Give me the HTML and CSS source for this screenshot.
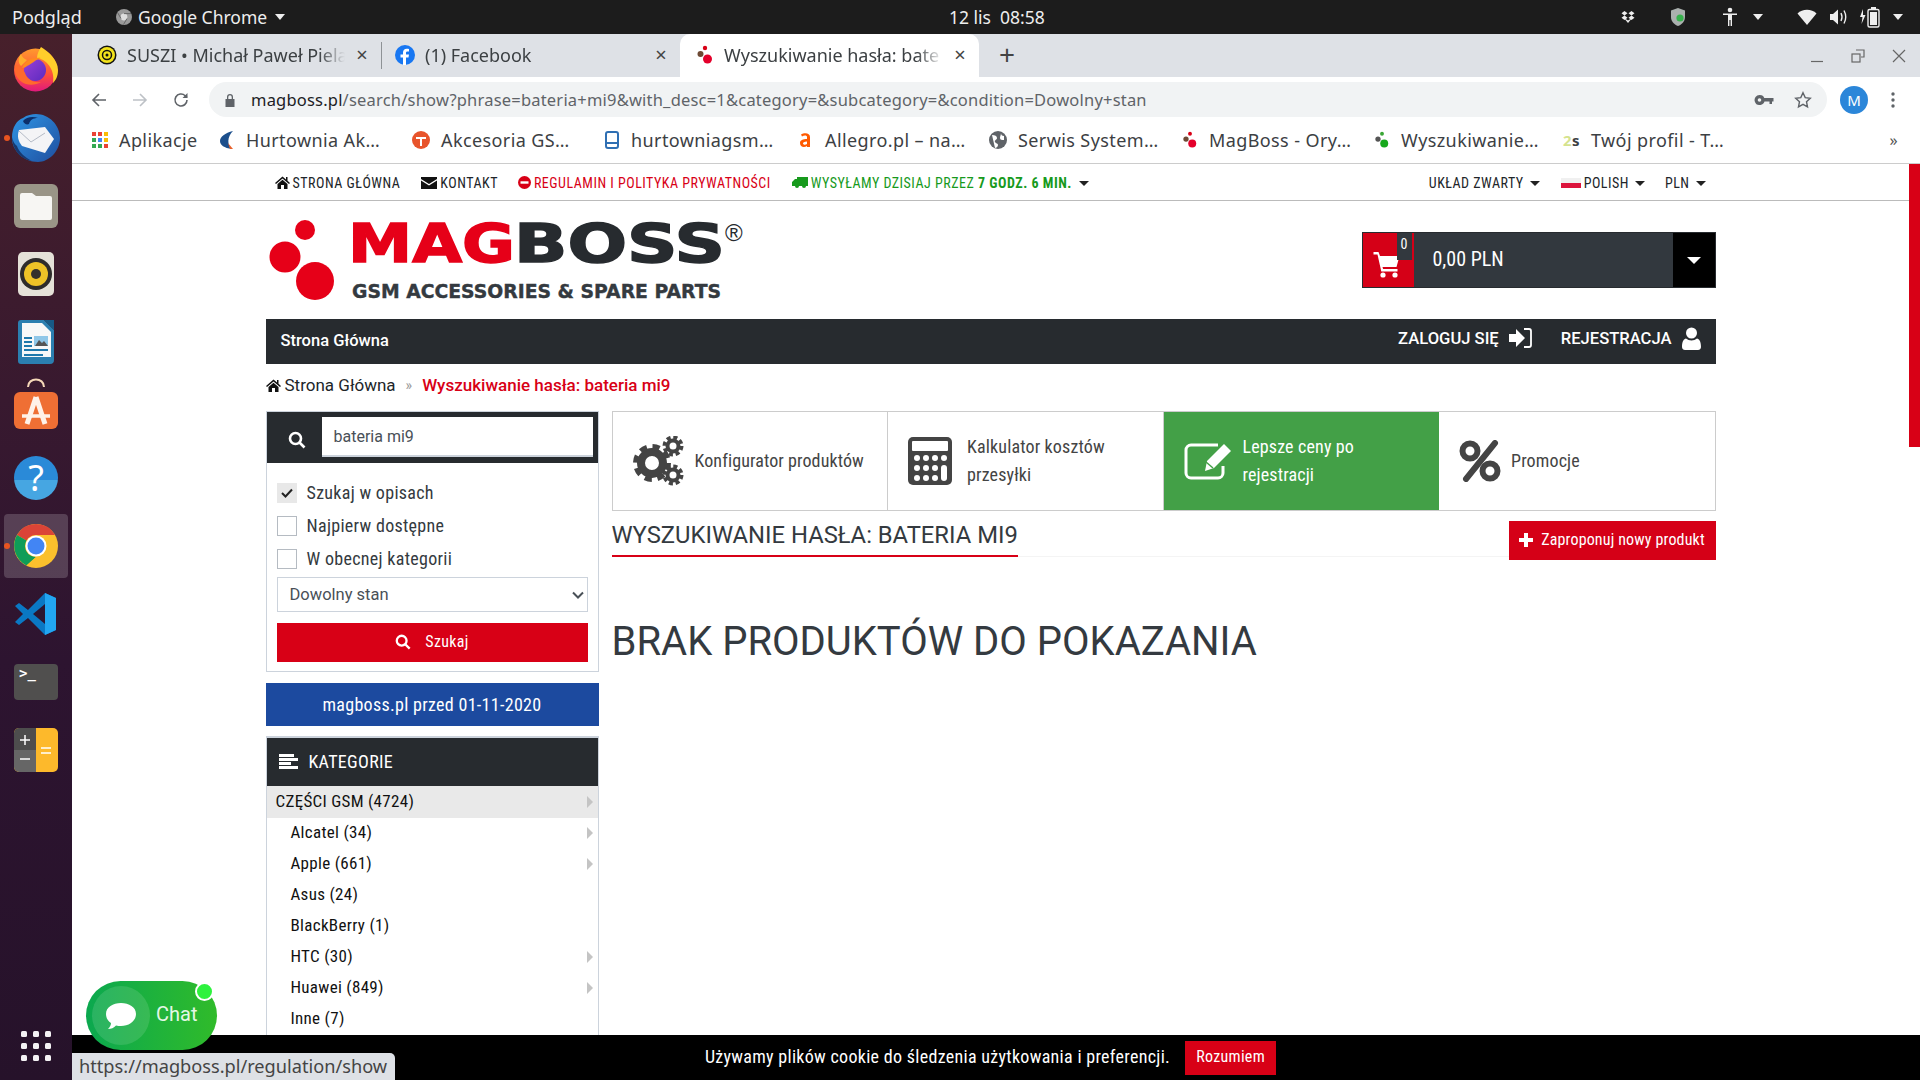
FILE: index.html
```html
<!DOCTYPE html>
<html lang="pl">
<head>
<meta charset="utf-8">
<title>Wyszukiwanie hasła: bateria mi9</title>
<link rel="stylesheet" href="styles.css">
</head>
<body>
<div class="desktop">
  <header class="topbar">
    <span class="tb-podglad">Podgląd</span>
    <svg class="tb-chrome" width="16" height="16" viewBox="0 0 16 16"><circle cx="8" cy="8" r="8" fill="#9a9a9a"/><circle cx="8" cy="8" r="3.400" fill="#ddd"/><path d="M8 4.600h7M5 9.500 1.500 3.500M11 9.500 7.500 15.500" stroke="#666" stroke-width="1"/></svg>
    <span class="tb-app">Google Chrome</span>
    <span class="caret tb-caret"></span>
    <span class="tb-clock">12 lis&nbsp; 08:58</span>
    <span class="tb-right">
      <svg class="ti-drop" width="14" height="14" viewBox="0 0 14 14" fill="#eee"><path d="M3.500 1 .5 3.200l3 2.200 3-2.200zM10.500 1l-3 2.200 3 2.200 3-2.200zM3.500 5.600l-3 2.200 3 2.200 3-2.200zM10.500 5.600l-3 2.200 3 2.200 3-2.200zM7 10.400l-3-2-.5.4L7 13l3.500-4.200-.5-.4z"/></svg>
      <svg class="ti-shield" width="16" height="20" viewBox="0 0 16 20"><path d="M8 1 1 3.500V10c0 4.500 3.500 7.800 7 9 3.500-1.200 7-4.500 7-9V3.500z" fill="#aab0ae"/><circle cx="10" cy="11" r="3.600" fill="#37b24d"/></svg>
      <svg class="ti-a11y" width="16" height="20" viewBox="0 0 16 20" fill="#eee"><circle cx="8" cy="3" r="2.300"/><path d="M1 6.500h14v1.600H10V19H8.600v-6H7.400v6H6V8.100H1z"/></svg>
      <span class="caret ti-c1"></span>
      <svg class="ti-wifi" width="20" height="16" viewBox="0 0 20 16" fill="#eee"><path d="M10 16 .5 4.500C3 2 6.300.8 10 .8s7 1.200 9.500 3.700z"/></svg>
      <svg class="ti-vol" width="20" height="18" viewBox="0 0 20 18"><path d="M1 6h3l5-4.500v15L4 12H1z" fill="#eee"/><path d="M12 5q2 4 0 8M15 2.500q3.500 6.500 0 13" fill="none" stroke="#eee" stroke-width="1.400"/></svg>
      <svg class="ti-bat" width="22" height="22" viewBox="0 0 22 22"><path d="M4 3 1 11h2.500L2.500 18l4-9H4z" fill="#eee"/><rect x="9" y="3.500" width="11" height="17.500" rx="1.500" fill="none" stroke="#eee" stroke-width="1.400"/><rect x="12" y="1" width="5" height="2.500" fill="#eee"/><rect x="11" y="6" width="7" height="13" fill="#eee"/></svg>
      <span class="caret ti-c2"></span>
    </span>
  </header>

  <div class="workspace">
    <nav class="dock">
      <div class="dock-item">
        <svg class="ico-ff" width="46" height="46" viewBox="0 0 46 46"><defs><linearGradient id="ff1" x1="0" y1="0" x2="0" y2="1"><stop offset="0" stop-color="#ff9a2d"/><stop offset=".6" stop-color="#ff4f3a"/><stop offset="1" stop-color="#e0197d"/></linearGradient><linearGradient id="ff2" x1="0" y1="0" x2="1" y2="1"><stop offset="0" stop-color="#9a3fd6"/><stop offset="1" stop-color="#5b2bbf"/></linearGradient></defs><circle cx="22.500" cy="24" r="21.500" fill="url(#ff1)"/><path d="M28 1C36 6 45 14 45 24c0 6-2 10-5 13 2-11-4-23-16-25 0-4 2-8 4-11z" fill="#ffce2b"/><path d="M8 8c1 3 3 5 6 6l-6 6C5 17 5 12 8 8z" fill="#ffb02b"/><circle cx="22" cy="24" r="11" fill="url(#ff2)"/><path d="M9 22c3-8 11-11 19-10-6 2-8 5-14 8-1 1-3 2-5 2z" fill="#ff8a1e"/><path d="M2 20c3-4 7 2 10 7 2 6 8 10 16 9-10 6-23 2-26-10z" fill="#ff6a2d"/></svg>
      </div>
      <div class="dock-item">
        <span class="run-dot"></span>
        <svg width="50" height="50" viewBox="0 0 50 50"><defs><linearGradient id="tb1" x1="0" y1="0" x2="1" y2="1"><stop offset="0" stop-color="#2f96e6"/><stop offset="1" stop-color="#1f4e9e"/></linearGradient></defs><path d="M25 1c13 0 24 11 24 24S38 49 27 49C13 49 1 38 1 25 1 14 6 7 12 5c4-3 9-4 13-4z" fill="url(#tb1)"/><path d="M12 8c3-4 10-5 15-3-5 0-8 2-9 6-2 1-5 0-6-3z" fill="#0c2f6b"/><path d="M1 24c0 12 8 22 20 24-8-4-13-9-15-15-3-2-4-5-5-9z" fill="#17386f"/><path d="M8 17 34 14l9 12-9 14-23-7C7 28 6 23 8 17z" fill="#f4f4f6"/><path d="M8 18l12 11 14-9" fill="none" stroke="#b5bbc6" stroke-width="1"/></svg>
      </div>
      <div class="dock-item">
        <svg width="46" height="46" viewBox="0 0 46 46"><rect x="1" y="1" width="44" height="44" rx="6" fill="#9a9587"/><path d="M7 12a2 2 0 0 1 2-2h10l4 3h14a2 2 0 0 1 2 2v20a2 2 0 0 1-2 2H9a2 2 0 0 1-2-2z" fill="#f7f6f3"/></svg>
      </div>
      <div class="dock-item">
        <svg width="38" height="46" viewBox="0 0 38 46"><rect x="1" y="1" width="36" height="44" rx="5" fill="#e5e1d8"/><circle cx="19" cy="23" r="16" fill="#2e2c2b"/><circle cx="19" cy="23" r="12" fill="#eec327"/><circle cx="19" cy="23" r="5" fill="#33302c"/></svg>
      </div>
      <div class="dock-item">
        <svg width="38" height="46" viewBox="0 0 38 46"><path d="M4 1h23l10 10v30a4 4 0 0 1-4 4H4a3 3 0 0 1-3-3V4a3 3 0 0 1 3-3z" fill="#2b7fb0"/><path d="M5 4h20l9 9v25H5z" fill="#f7f8f8"/><path d="M27 1l10 0v10z" fill="#175a86"/><rect x="17" y="17" width="14" height="10" fill="#8fc7e8"/><path d="M18 27l4-6 3 3 2-2 4 5z" fill="#555"/><path d="M7 18h8v2H7zM7 22h8v2H7zM7 26h8v2H7zM7 30h24v2H7zM7 35h19v2H7z" fill="#1f79ac"/></svg>
      </div>
      <div class="dock-item">
        <svg class="ico-store" width="46" height="52" viewBox="0 0 46 52"><path d="M15 9c0-10 16-10 16 0" fill="none" stroke="#f5d8b8" stroke-width="2"/><rect x="1" y="14" width="44" height="37" rx="6" fill="#ef6f34"/><path d="M23 19 14 46M23 19l9 27" stroke="#fff2e8" stroke-width="5"/><path d="M9 38h28" stroke="#fff2e8" stroke-width="3.500"/></svg>
      </div>
      <div class="dock-item">
        <span class="help-ico">?</span>
      </div>
      <div class="dock-item dock-active">
        <span class="run-dot"></span>
        <svg width="46" height="46" viewBox="0 0 46 46"><circle cx="23" cy="23" r="22" fill="#fbc02d"/><path d="M23 1a22 22 0 0 1 19.050 11H23a11 11 0 0 0-9.500 5.500L4 12A22 22 0 0 1 23 1z" fill="#db4437"/><path d="M4 12l9.500 5.500a11 11 0 0 0 9.500 16.500l-9.500 8.500 0 0A22 22 0 0 1 4 12z" fill="#0f9d58"/><path d="M13.500 42.600 23 34a11 11 0 0 0 9.500-16.500H42A22 22 0 0 1 13.500 42.600z" fill="#fbc02d"/><circle cx="23" cy="23" r="10.500" fill="#fff"/><circle cx="23" cy="23" r="8.500" fill="#4285f4"/></svg>
      </div>
      <div class="dock-item">
        <svg width="44" height="44" viewBox="0 0 44 44"><path d="M31 1 14 18 5 11 1 14l8 8-8 8 4 3 9-7 17 17 11-5V6z" fill="#0a78c4"/><path d="M31 1l11 5v32l-11 5z" fill="#22a6f2"/><path d="M31 12 19 22l12 10z" fill="#2c1530"/></svg>
      </div>
      <div class="dock-item">
        <span class="term-ico">&gt;_</span>
      </div>
      <div class="dock-item">
        <svg width="46" height="46" viewBox="0 0 46 46"><rect x="1" y="1" width="44" height="44" rx="5" fill="#fdb92b"/><path d="M6 1h17v22H1V6a5 5 0 0 1 5-5z" fill="#4d4d4d"/><path d="M1 23h22v22H6a5 5 0 0 1-5-5z" fill="#666"/><path d="M7 13h10M12 8v10M7 32h10M28 21h10M28 26h10" stroke="#fff" stroke-width="1.500"/></svg>
      </div>
      <div class="dock-apps">
        <i></i><i></i><i></i><i></i><i></i><i></i><i></i><i></i><i></i>
      </div>
    </nav>

    <div class="browser">
      <div class="tabstrip">
        <div class="tab">
          <svg class="fav" width="20" height="20" viewBox="0 0 20 20"><circle cx="10" cy="10" r="9.500" fill="#111"/><circle cx="10" cy="10" r="8" fill="#f2e21b"/><circle cx="10" cy="10" r="4.500" fill="none" stroke="#111" stroke-width="1.500"/><circle cx="10" cy="10" r="1.500" fill="#111"/></svg>
          <span class="tab-title">SUSZI • Michał Paweł Piela</span>
          <span class="tab-x">×</span>
        </div>
        <span class="tab-sep"></span>
        <div class="tab tab-fb">
          <svg class="fav" width="20" height="20" viewBox="0 0 20 20"><circle cx="10" cy="10" r="10" fill="#1877f2"/><path d="M11 20v-7.500h2.500L14 9.500h-3V8c0-1 .4-1.500 1.600-1.500H14V4c-.8-.1-1.500-.2-2.300-.2C9.500 3.800 8 5.200 8 7.600v1.900H5.500v3H8V20z" fill="#fff"/></svg>
          <span class="tab-title">(1) Facebook</span>
          <span class="tab-x">×</span>
        </div>
        <div class="tab tab-active">
          <svg class="fav" width="18" height="20" viewBox="0 0 18 20"><circle cx="9" cy="3" r="2.200" fill="#d80016"/><circle cx="4.500" cy="9" r="3" fill="#6e4a35"/><circle cx="11.500" cy="14" r="4.500" fill="#e4002b"/></svg>
          <span class="tab-title">Wyszukiwanie hasła: bate</span>
          <span class="tab-x">×</span>
        </div>
        <span class="tab-plus">+</span>
        <div class="winctl">
          <svg width="16" height="16" viewBox="0 0 16 16"><path d="M2 13.500h12" stroke="#666" stroke-width="1.200"/></svg>
          <svg width="16" height="16" viewBox="0 0 16 16" fill="none" stroke="#666" stroke-width="1.200"><path d="M6 2h8v7h-3"/><rect x="2" y="6" width="8" height="8"/></svg>
          <svg width="16" height="16" viewBox="0 0 16 16"><path d="M2 2l12 12M14 2 2 14" stroke="#666" stroke-width="1.200"/></svg>
        </div>
      </div>

      <div class="toolbar">
        <svg class="tool-back" width="18" height="18" viewBox="0 0 18 18" fill="none" stroke="#5f6368" stroke-width="1.600"><path d="M16 9H3M9 3 3 9l6 6"/></svg>
        <svg class="tool-fwd" width="18" height="18" viewBox="0 0 18 18" fill="none" stroke="#bdc1c6" stroke-width="1.600"><path d="M2 9h13M9 3l6 6-6 6"/></svg>
        <svg class="tool-reload" width="18" height="18" viewBox="0 0 18 18" fill="none" stroke="#5f6368" stroke-width="1.600"><path d="M15 9a6 6 0 1 1-1.800-4.300L15 6.500"/><path d="M15.500 2v5h-5" fill="#5f6368" stroke="none"/></svg>
        <div class="omnibox">
          <svg class="omni-lock" width="12" height="14" viewBox="0 0 12 14" fill="#5f6368"><path d="M3 6V4a3 3 0 0 1 6 0v2h1.500v8h-9V6zm1.300 0h3.400V4a1.700 1.700 0 0 0-3.400 0z"/></svg>
          <span class="omni-url"><b>magboss.pl</b>/search/show?phrase=bateria+mi9&amp;with_desc=1&amp;category=&amp;subcategory=&amp;condition=Dowolny+stan</span>
          <svg class="omni-key" width="20" height="12" viewBox="0 0 20 12" fill="#5f6368"><path d="M5.500 1a5 5 0 1 1-4.700 6.500 5 5 0 0 1 4.700-6.500zm0 3.200a1.800 1.800 0 1 0 0 3.600 1.800 1.800 0 0 0 0-3.600zM10 4h9.500v3.500H18V10h-2.500V7.500H10z"/></svg>
          <svg class="omni-star" width="18" height="18" viewBox="0 0 18 18" fill="none" stroke="#5f6368" stroke-width="1.400"><path d="M9 1.800l2.200 4.800 5.100.6-3.800 3.500 1 5.100L9 13.300l-4.500 2.500 1-5.100-3.800-3.500 5.100-.6z"/></svg>
        </div>
        <span class="avatar">M</span>
        <svg class="kebab" width="4" height="16" viewBox="0 0 4 16" fill="#5f6368"><circle cx="2" cy="2" r="1.700"/><circle cx="2" cy="8" r="1.700"/><circle cx="2" cy="14" r="1.700"/></svg>
      </div>

      <div class="bookmarks">
        <div class="bm"><svg width="16" height="16" viewBox="0 0 16 16"><path d="M0 0h4v4H0z" fill="#ea4335"/><path d="M6 0h4v4H6z" fill="#ea4335"/><path d="M12 0h4v4h-4z" fill="#fbbc04"/><path d="M0 6h4v4H0z" fill="#34a853"/><path d="M6 6h4v4H6z" fill="#4285f4"/><path d="M12 6h4v4h-4z" fill="#fbbc04"/><path d="M0 12h4v4H0z" fill="#34a853"/><path d="M6 12h4v4H6z" fill="#34a853"/><path d="M12 12h4v4h-4z" fill="#ea4335"/></svg><span>Aplikacje</span></div>
        <div class="bm"><svg width="16" height="20" viewBox="0 0 16 18"><path d="M14 0C6 2 1 6 1 10s4 7 12 8C8 14 8 6 14 0z" fill="#1c4f8c"/><path d="M9 12l5 6-3 0z" fill="#e8622c"/></svg><span>Hurtownia Ak…</span></div>
        <div class="bm"><svg width="18" height="18" viewBox="0 0 18 18"><circle cx="9" cy="9" r="9" fill="#e8542b"/><path d="M4 6h10v2H10v7H8V8H4z" fill="#fff"/></svg><span>Akcesoria GS…</span></div>
        <div class="bm"><svg width="16" height="20" viewBox="0 0 16 18" fill="none" stroke="#2f6fb3" stroke-width="2"><rect x="2" y="1" width="12" height="16" rx="2"/><path d="M2 12h12"/></svg><span>hurtowniagsm…</span></div>
        <div class="bm"><svg width="16" height="18" viewBox="0 0 16 18"><path d="M3 3.500c3-2 9-2 9 2.500v10H9v-1c-3 2-7 1-7-3 0-3 3-4 7-4V6c0-2-3-2-5-.5zM9 10.500c-3 0-4 1-4 2s2 2 4 .5z" fill="#ff5a00"/></svg><span>Allegro.pl – na…</span></div>
        <div class="bm"><svg width="18" height="18" viewBox="0 0 18 18"><circle cx="9" cy="9" r="9" fill="#5f6368"/><path d="M3 4c3 0 5 1 5 3S5 9 6 11s3 1 3 3-2 3-3 3M12 2c0 2 1 3 3 3v4c-2 0-4 0-4-2s1-3 1-5z" fill="#fff"/></svg><span>Serwis System…</span></div>
        <div class="bm"><svg width="16" height="20" viewBox="0 0 18 20"><circle cx="9" cy="3" r="2.200" fill="#d80016"/><circle cx="4.500" cy="9" r="3" fill="#6e4a35"/><circle cx="11.500" cy="14" r="4.500" fill="#e4002b"/></svg><span>MagBoss - Ory…</span></div>
        <div class="bm"><svg width="16" height="20" viewBox="0 0 18 20"><circle cx="9" cy="3" r="2.200" fill="#3aa635"/><circle cx="4.500" cy="9" r="3" fill="#555"/><circle cx="11.500" cy="14" r="4.500" fill="#17a81c"/></svg><span>Wyszukiwanie…</span></div>
        <div class="bm"><span class="bm-2s"><em>2</em>s</span><span>Twój profil - T…</span></div>
        <span class="bm-more">»</span>
      </div>

      <div class="viewport">
        <div class="page">
          <div class="utility">
            <div class="wrap util-row">
              <a class="u-home"><svg width="15" height="13" viewBox="0 0 15 13" fill="#111"><path d="M7.500.5 0 7l1 1 6.500-5.600L14 8l1-1-2.500-2.200V1H11v2.400zM2.500 8v5h3.500V9h3v4h3.500V8l-5-4.300z"/></svg>STRONA GŁÓWNA</a>
              <a class="u-contact"><svg width="16" height="12" viewBox="0 0 16 12" fill="#111"><path d="M0 0h16v2L8 7 0 2zM0 3.600 8 8.600 16 3.600V12H0z"/></svg>KONTAKT</a>
              <a class="u-rules"><svg width="13" height="13" viewBox="0 0 13 13"><circle cx="6.500" cy="6.500" r="6.500" fill="#d80016"/><rect x="2.500" y="5.300" width="8" height="2.400" fill="#fff"/></svg>REGULAMIN I POLITYKA PRYWATNOŚCI</a>
              <a class="u-ship"><svg width="16" height="12" viewBox="0 0 16 12" fill="#179a1d"><path d="M5 0h11v9H14a2 2 0 0 1-4 0H7a2 2 0 0 1-4 0H0V5l3-3h2z"/></svg>WYSYŁAMY DZISIAJ PRZEZ <b>7 GODZ. 6 MIN.</b><span class="caret dark u-c"></span></a>
              <span class="util-right">
                <a class="u-layout">UKŁAD ZWARTY<span class="caret dark"></span></a>
                <a class="u-lang"><span class="flag"></span>POLISH<span class="caret dark"></span></a>
                <a class="u-cur">PLN<span class="caret dark"></span></a>
              </span>
            </div>
          </div>

          <div class="wrap">
            <div class="masthead">
              <svg class="logo" width="490" height="92" viewBox="0 0 490 92">
                <circle cx="39" cy="19" r="10" fill="#e60018"/><circle cx="19" cy="46" r="15.500" fill="#e60018"/><circle cx="49" cy="70" r="19" fill="#e60018"/>
                <text x="82" y="51" class="logo-big logo-red" textLength="167" lengthAdjust="spacingAndGlyphs">MAG</text>
                <text x="248" y="51" class="logo-big logo-dark" textLength="211" lengthAdjust="spacingAndGlyphs">BOSS</text>
                <text x="459" y="30" class="logo-reg">®</text>
                <text x="86" y="87" class="logo-tag" textLength="369" lengthAdjust="spacingAndGlyphs">GSM ACCESSORIES &amp; SPARE PARTS</text>
              </svg>
              <div class="cart">
                <div class="cart-ico">
                  <svg width="29" height="27" viewBox="0 0 28 27" fill="#fff"><path d="M0 1h5l1.500 4H26l-3 11H9l.6 2H24v2.500H7.800L4 3.500H0z"/><circle cx="9.500" cy="24" r="2.600"/><circle cx="21.500" cy="24" r="2.600"/></svg>
                  <span class="cart-badge">0</span>
                </div>
                <span class="cart-sum">0,00 PLN</span>
                <span class="cart-drop"><span class="caret big"></span></span>
              </div>
            </div>

            <div class="mainnav">
              <span class="nav-home">Strona Główna</span>
              <span class="nav-login">ZALOGUJ SIĘ
                <svg width="23" height="20" viewBox="0 0 23 20" fill="#fff"><path d="M0 6h7V1l9 9-9 9v-5H0z"/><path d="M15 1h5a2 2 0 0 1 2 2v14a2 2 0 0 1-2 2h-5" fill="none" stroke="#fff" stroke-width="1.800"/></svg>
              </span>
              <span class="nav-reg">REJESTRACJA
                <svg width="19" height="23" viewBox="0 0 19 23" fill="#fff"><circle cx="9.500" cy="6" r="5.500"/><path d="M0 20c0-6 2-8 4-8.500 3 2.500 8 2.500 11 0 2 .5 4 2.500 4 8.500 0 2-1.500 3-3 3H3c-1.500 0-3-1-3-3z"/></svg>
              </span>
            </div>

            <div class="crumbs">
              <svg width="15" height="13" viewBox="0 0 15 13" fill="#111"><path d="M7.500.5 0 7l1 1 6.500-5.600L14 8l1-1-2.500-2.200V1H11v2.400zM2.500 8v5h3.500V9h3v4h3.500V8l-5-4.300z"/></svg>
              <span class="cr-home">Strona Główna</span>
              <span class="cr-sep">»</span>
              <span class="cr-cur">Wyszukiwanie hasła: bateria mi9</span>
            </div>

            <div class="columns">
              <aside class="side">
                <div class="searchbox">
                  <div class="sb-head">
                    <svg class="ico-search" width="18" height="18" viewBox="0 0 18 18" fill="none" stroke="#fff" stroke-width="2.600"><circle cx="7.500" cy="7.500" r="5.500"/><path d="M11.500 11.500 16.500 16.500"/></svg>
                    <span class="sb-input">bateria mi9</span>
                  </div>
                  <div class="sb-body">
                    <div class="chk"><span class="box on"><svg width="12" height="10" viewBox="0 0 12 10"><path d="M1 5l3.500 3.500L11 1.500" fill="none" stroke="#222" stroke-width="2"/></svg></span><span class="cond">Szukaj w opisach</span></div>
                    <div class="chk"><span class="box"></span><span class="cond">Najpierw dostępne</span></div>
                    <div class="chk"><span class="box"></span><span class="cond">W obecnej kategorii</span></div>
                    <div class="sel"><span>Dowolny stan</span><svg width="12" height="8" viewBox="0 0 12 8"><path d="M1 1.500l5 5 5-5" fill="none" stroke="#495057" stroke-width="2"/></svg></div>
                    <div class="sb-btn"><svg width="16" height="16" viewBox="0 0 18 18" fill="none" stroke="#fff" stroke-width="2.600"><circle cx="7.500" cy="7.500" r="5.500"/><path d="M11.500 11.500 16.500 16.500"/></svg><span class="cond">Szukaj</span></div>
                  </div>
                </div>
                <div class="oldsite"><span class="cond">magboss.pl przed 01-11-2020</span></div>
                <div class="cats">
                  <div class="cats-head">
                    <svg width="19" height="15" viewBox="0 0 19 15" fill="#fff"><path d="M0 0h15v3H0zM0 4h19v3H0zM0 8h12v3H0zM0 12h19v3H0z"/></svg>
                    <span class="cond">KATEGORIE</span>
                  </div>
                  <div class="cat cat-top"><span class="cond">CZĘŚCI GSM (4724)</span><i class="arr"></i></div>
                  <div class="cat"><span class="cond">Alcatel (34)</span><i class="arr"></i></div>
                  <div class="cat"><span class="cond">Apple (661)</span><i class="arr"></i></div>
                  <div class="cat"><span class="cond">Asus (24)</span></div>
                  <div class="cat"><span class="cond">BlackBerry (1)</span></div>
                  <div class="cat"><span class="cond">HTC (30)</span><i class="arr"></i></div>
                  <div class="cat"><span class="cond">Huawei (849)</span><i class="arr"></i></div>
                  <div class="cat"><span class="cond">Inne (7)</span></div>
                </div>
              </aside>

              <main class="content">
                <div class="promo">
                  <div class="promo-item promo-cogs">
                    <svg class="pi-cogs" width="52" height="50" viewBox="0 0 52 50" fill="none" stroke="#444">
                      <circle cx="19" cy="27" r="11" stroke-width="8"/><circle cx="19" cy="27" r="16" stroke-width="6" stroke-dasharray="7 5.570"/>
                      <circle cx="40" cy="10" r="5.500" stroke-width="4"/><circle cx="40" cy="10" r="8.500" stroke-width="4" stroke-dasharray="4 2.680"/>
                      <circle cx="40" cy="39" r="5.500" stroke-width="4"/><circle cx="40" cy="39" r="8.500" stroke-width="4" stroke-dasharray="4 2.680"/>
                    </svg>
                    <span class="cond promo-text">Konfigurator produktów</span>
                  </div>
                  <div class="promo-item promo-calc">
                    <svg class="pi-calc" width="44" height="48" viewBox="0 0 44 48"><rect width="44" height="48" rx="5" fill="#444"/><rect x="4" y="4" width="36" height="10" rx="1" fill="#fff"/><g fill="#fff"><circle cx="9" cy="21" r="3"/><circle cx="18" cy="21" r="3"/><circle cx="27" cy="21" r="3"/><circle cx="36" cy="21" r="3"/><circle cx="9" cy="31" r="3"/><circle cx="18" cy="31" r="3"/><circle cx="27" cy="31" r="3"/><circle cx="9" cy="41" r="3"/><circle cx="18" cy="41" r="3"/><circle cx="27" cy="41" r="3"/><rect x="33" y="28" width="6" height="16" rx="3"/></g></svg>
                    <span class="cond promo-text">Kalkulator kosztów<br>przesyłki</span>
                  </div>
                  <div class="promo-item promo-green">
                    <svg class="pi-edit" width="48" height="38" viewBox="0 0 48 38"><path d="M39 24v7a5 5 0 0 1-5 5H7a5 5 0 0 1-5-5V8a5 5 0 0 1 5-5h27" fill="none" stroke="#fff" stroke-width="3"/><path d="M40 2l7 7-17 17-9 3 2-10z" fill="#fff"/><path d="M22 20l7 6" stroke="#43a047" stroke-width="1.500"/></svg>
                    <span class="cond promo-text">Lepsze ceny po<br>rejestracji</span>
                  </div>
                  <div class="promo-item">
                    <svg class="pi-pct" width="42" height="42" viewBox="0 0 42 42" fill="none" stroke="#444"><circle cx="11" cy="11" r="7.500" stroke-width="6"/><circle cx="31" cy="31" r="7.500" stroke-width="6"/><path d="M36 3 7 39" stroke-width="6" stroke-linecap="round"/></svg>
                    <span class="cond promo-text">Promocje</span>
                  </div>
                </div>

                <div class="titlerow">
                  <div class="titleline"><h1 class="title">WYSZUKIWANIE HASŁA: BATERIA MI9</h1></div>
                  <div class="suggest"><svg width="14" height="14" viewBox="0 0 14 14" fill="#fff"><path d="M5 0h4v5h5v4H9v5H5V9H0V5h5z"/></svg><span class="cond promo-text">Zaproponuj nowy produkt</span></div>
                </div>

                <h2 class="empty">BRAK PRODUKTÓW DO POKAZANIA</h2>
              </main>
            </div>
          </div>
        </div>
        <div class="scrollbar"><div class="thumb"></div></div>
      </div>
    </div>
  </div>

  <div class="cookie">
    <span class="cond cookie-text">Używamy plików cookie do śledzenia użytkowania i preferencji.</span>
    <span class="cookie-btn"><span class="cond">Rozumiem</span></span>
  </div>
  <div class="chat">
    <span class="chat-inner">
      <svg width="32" height="28" viewBox="0 0 32 28" fill="#fff"><path d="M16 1c8 0 15 4 15 11s-7 12-15 12c-2 0-3 0-5-.5C9 26 6 27 3 27c2-2 3-4 3-6C3 19 1 16 1 12 1 5 8 1 16 1z"/></svg>
    </span>
    <span class="chat-label">Chat</span>
    <span class="chat-dot"></span>
  </div>
  <div class="status">https://magboss.pl/regulation/show</div>
</div>
</body>
</html>
```
FILE: styles.css
```css
* { box-sizing: border-box; }
html, body { margin: 0; height: 100%; overflow: hidden; }
body { font-family: Roboto, "Liberation Sans", sans-serif; color: #343a40; background: #fff; }
.desktop { position: relative; width: 1920px; height: 1080px; display: flex; flex-direction: column; overflow: hidden; }
.cond { font-stretch: 75%; display: inline-block; letter-spacing: .3px; white-space: nowrap; }

.caret { display: inline-block; width: 0; height: 0; border-left: 5px solid transparent; border-right: 5px solid transparent; border-top: 6px solid #eee; }
.caret.dark { border-left-width: 5px; border-right-width: 5px; border-top: 5px solid #222; margin-left: 6px; vertical-align: 2px; }
.caret.big { border-left-width: 7px; border-right-width: 7px; border-top: 7px solid #fff; }

/* top bar */
.topbar { height: 34px; flex: none; background: #1c1c1c; color: #eee; display: flex; align-items: center; padding-left: 12px; font: 17.500px "Noto Sans", sans-serif; }
.tb-podglad { width: 104px; font-size: 18px; }
.tb-chrome { margin-right: 6px; }
.tb-app { width: 131px; }
.tb-caret { margin-left: 6px; }
.tb-clock { margin-left: 664px; width: 100px; white-space: nowrap; }
.tb-right { display: flex; align-items: center; margin-left: 572px; }
.ti-shield { margin-left: 35px; }
.ti-a11y { margin-left: 36px; }
.ti-c1 { margin-left: 15px; }
.ti-wifi { margin-left: 34px; }
.ti-vol { margin-left: 12px; }
.ti-bat { margin-left: 10px; }
.ti-c2 { margin-left: 12px; }

.workspace { flex: 1; display: flex; min-height: 0; }

/* dock */
.dock { width: 72px; flex: none; display: flex; flex-direction: column; padding-top: 2px; background: linear-gradient(#47202b, #38192f 35%, #2d1430 60%, #26122a); }
.dock-item { height: 68px; flex: none; display: flex; align-items: center; justify-content: center; position: relative; }
.dock-active::before { content: ""; position: absolute; left: 4px; right: 4px; top: 2px; bottom: 2px; background: rgba(255,255,255,.18); border-radius: 4px; }
.dock-item svg { position: relative; }
.ico-ff { margin-bottom: 2px; }
.ico-store { margin-bottom: 12px; }
.run-dot { position: absolute; left: 4px; top: 31px; width: 6px; height: 6px; border-radius: 50%; background: #e95420; z-index: 1; }
.help-ico { width: 44px; height: 44px; border-radius: 50%; background: linear-gradient(#2a8ad8 55%, #46a6e2 55%); color: #fff; font: 36px/44px "Noto Sans", sans-serif; text-align: center; }
.term-ico { width: 44px; height: 36px; border-radius: 4px; background: #504f4e; color: #fff; font: bold 14px/18px "DejaVu Sans Mono", monospace; padding-left: 5px; }
.dock-apps { margin-top: auto; margin-bottom: 19px; margin-left: 21px; width: 30px; display: grid; grid-template-columns: repeat(3, 6px); gap: 6px; }
.dock-apps i { width: 6px; height: 6px; background: #f4f2f4; border-radius: 1.500px; }

/* browser chrome */
.browser { flex: 1; min-width: 0; display: flex; flex-direction: column; }
.tabstrip { height: 43px; flex: none; background: #dee1e6; display: flex; align-items: stretch; padding-left: 12px; font: 18px "Noto Sans", sans-serif; color: #3c4043; }
.tab { width: 297px; display: flex; align-items: center; padding: 0 12px 2px 13px; gap: 10px; }
.tab-fb { width: 298px; }
.tab-sep { width: 1px; margin: 8px 0; background: #8e9296; }
.tab-title { flex: 1; min-width: 0; white-space: nowrap; overflow: hidden; -webkit-mask-image: linear-gradient(90deg, #000 88%, transparent); mask-image: linear-gradient(90deg, #000 88%, transparent); }
.tab-x { width: 14px; font-size: 20px; line-height: 1; text-align: center; color: #444; }
.tab-active { background: #fff; border-radius: 10px 10px 0 0; width: 299px; padding-left: 16px; }
.tab-plus { font-size: 28px; line-height: 41px; margin-left: 20px; color: #444; }
.winctl { margin-left: auto; display: flex; align-items: center; gap: 25px; padding-right: 13px; }

.toolbar { height: 45px; flex: none; background: #fff; display: flex; align-items: center; padding-left: 18px; }
.tool-fwd { margin-left: 23px; }
.tool-reload { margin-left: 23px; }
.omnibox { width: 1618px; height: 35px; margin-left: 19px; background: #f1f3f4; border-radius: 18px; display: flex; align-items: center; padding: 0 15px; }
.omni-url { margin-left: 15px; font: 16.500px "Noto Sans", sans-serif; letter-spacing: .2px; color: #5f6368; white-space: nowrap; flex: 1; }
.omni-url b { font-weight: 400; color: #202124; }
.omni-key { margin-right: 20px; }
.avatar { width: 28px; height: 28px; margin-left: 13px; border-radius: 50%; background: #2b86d9; color: #fff; font: 15px/28px "Noto Sans", sans-serif; text-align: center; }
.kebab { margin-left: 23px; }

.bookmarks { height: 42px; flex: none; background: #fff; border-bottom: 1px solid #ccc; display: grid; grid-template-columns: 127px 193px 192px 194px 191px 193px 192px 189px 170px 1fr; align-items: center; padding: 0 0 5px 20px; font: 18px "Noto Sans", sans-serif; letter-spacing: .4px; color: #3c4043; }
.bm { display: flex; align-items: center; gap: 11px; white-space: nowrap; }
.bm svg { flex: none; }
.bm-2s { font-size: 15px; font-weight: 700; width: 17px; letter-spacing: .5px; }
.bm-2s em { font-style: normal; color: #d5e38e; }
.bm-more { justify-self: end; padding-right: 22px; font-size: 16px; color: #555; }

/* page */
.viewport { flex: 1; display: flex; min-height: 0; overflow: hidden; }
.page { flex: 1; min-width: 0; }
.scrollbar { width: 11px; flex: none; background: #fff; }
.thumb { height: 283px; background: #d80016; }
.wrap { width: 1450px; margin: 0 auto; }

.utility { height: 37px; border-bottom: 1px solid #bbb; font-size: 14px; font-weight: 400; color: #212529; }
.util-row { height: 36px; display: flex; align-items: center; padding: 2px 0 0 9px; font-stretch: 75%; letter-spacing: .5px; white-space: nowrap; }
.util-row svg { margin-right: 3px; vertical-align: -1px; }
.u-contact { margin-left: 21px; }
.u-rules { margin-left: 20px; color: #d80016; }
.u-ship { margin-left: 21px; color: #179a1d; }
.u-ship b { font-weight: 700; }
.u-ship .u-c { margin-left: 7px; }
.util-right { margin-left: auto; display: flex; align-items: center; padding-right: 10px; }
.u-lang { margin-left: 21px; }
.u-cur { margin-left: 20px; }
.flag { display: inline-block; width: 20px; height: 10px; margin-right: 3px; background: linear-gradient(#f0f0f0 50%, #dc143c 50%); vertical-align: 0; }

.masthead { height: 118px; display: flex; align-items: flex-start; }
.logo { margin-top: 10px; }
.logo-big { font: 900 54px "DejaVu Sans", sans-serif; stroke-width: 1.500px; }
.logo-red { fill: #e60018; stroke: #e60018; }
.logo-dark { fill: #272b2f; stroke: #272b2f; }
.logo-reg { font: 24px "Liberation Sans", sans-serif; fill: #272b2f; }
.logo-tag { font: 900 19px "DejaVu Sans", sans-serif; fill: #343a40; stroke: #343a40; stroke-width: .4px; }
.cart { width: 354px; height: 56px; margin-top: 31px; margin-left: auto; background: #32383e; border: 1px solid #272b2f; display: flex; align-items: stretch; }
.cart-ico { width: 51px; background: #d50017; position: relative; display: flex; align-items: center; padding: 8px 0 0 10px; }
.cart-badge { position: absolute; right: 2px; top: 0; width: 15px; height: 27px; background: #32383e; color: #fff; font-size: 14px; line-height: 22px; text-align: center; font-stretch: 75%; }
.cart-sum { flex: 1; padding-left: 19px; color: #fff; font-size: 20px; line-height: 52px; font-stretch: 75%; }
.cart-drop { width: 42px; background: #000; display: flex; align-items: center; justify-content: center; }

.mainnav { height: 45px; background: #272b2f; color: #fff; display: flex; align-items: center; padding: 0 15px; font-weight: 500; font-size: 16.600px; white-space: nowrap; }
.nav-home { margin-right: auto; font-size: 16.500px; margin-top: -2px; }
.nav-login, .nav-reg { display: flex; align-items: center; gap: 10px; margin-top: -7px; }
.nav-reg { margin-left: 29px; }

.crumbs { height: 47px; display: flex; align-items: center; padding-bottom: 5px; font-size: 17px; color: #212529; }
.crumbs svg { margin-right: 4px; }
.cr-sep { margin: 0 10px; color: #999; font-size: 14px; }
.cr-cur { color: #d80016; font-weight: 500; }

.columns { display: flex; gap: 13px; align-items: flex-start; }
.side { width: 333px; flex: none; }
.searchbox { border: 1px solid #ccd3dc; height: 261px; }
.sb-head { height: 51px; background: #272b2f; display: flex; align-items: center; }
.ico-search { margin: 5px 0 0 21px; }
.sb-input { width: 271px; height: 40px; margin-left: 16px; background: #fff; border-bottom: 2px solid #ccd3dc; padding: 0 11px 0 12px; font-size: 16px; line-height: 39px; color: #495057; margin-top: -1px; }
.sb-body { padding: 13px 10px 0; }
.chk { height: 33px; display: flex; align-items: center; gap: 10px; font-size: 18px; color: #343a40; }
.box { width: 20px; height: 20px; border: 1px solid #b5bbc2; background: #fff; display: flex; align-items: center; justify-content: center; }
.box.on { background: #e8e8e8; border-color: #e8e8e8; }
.sel { height: 35px; margin-top: 2px; border: 1px solid #ccd3dc; display: flex; align-items: center; justify-content: space-between; padding: 0 3px 0 12px; font-size: 16.500px; color: #495057; }
.sb-btn { height: 39px; margin-top: 11px; padding-bottom: 2px; background: #d80016; color: #fff; display: flex; align-items: center; justify-content: center; gap: 14px; font-size: 16px; }
.oldsite { height: 43px; margin-top: 11px; background: #1c4a9f; color: #fff; font-size: 18px; display: flex; align-items: center; justify-content: center; }
.cats { margin-top: 10px; border: 1px solid #ccd3dc; border-top: 2px solid #ccd3dc; border-bottom: 0; }
.cats-head { height: 48px; padding: 0 0 2px 12px; background: #272b2f; color: #fff; display: flex; align-items: center; gap: 11px; font-size: 18px; }
.cat { height: 31px; display: flex; align-items: center; justify-content: space-between; padding: 0 5px 3px 24px; font-size: 17px; color: #111; }
.cat-top { height: 32px; background: #e9e9e9; padding-left: 9px; }
.arr { width: 0; height: 0; border-left: 6px solid #c4c4c4; border-top: 6px solid transparent; border-bottom: 6px solid transparent; margin-top: 2px; }

.content { flex: 1; min-width: 0; }
.promo { height: 100px; border: 1px solid #ccc; display: grid; grid-template-columns: repeat(4, 1fr); }
.promo-item { display: flex; align-items: center; gap: 11px; padding-left: 20px; border-right: 1px solid #ccc; font-size: 18px; line-height: 28px; color: #444; }
.promo-item:last-child { border-right: 0; gap: 10px; }
.promo-text { letter-spacing: .15px; }
.promo-cogs { gap: 10px; }
.promo-cogs .promo-text { letter-spacing: .1px; }
.promo-calc { gap: 15px; }
.promo-green { background: #43a047; color: #fff; border-right: 0; }
.titlerow { display: flex; align-items: flex-start; }
.titleline { flex: 1; height: 46px; border-bottom: 1px solid #f4f4f4; }
.title { display: inline-block; height: 46px; margin: 0; border-bottom: 2px solid #d80016; font-size: 23.800px; font-weight: 400; line-height: 48px; color: #343a40; white-space: nowrap; }
.suggest { width: 207px; height: 39px; margin-top: 10px; padding-bottom: 2px; background: #d50017; color: #fff; display: flex; align-items: center; justify-content: center; gap: 8px; font-size: 16px; white-space: nowrap; }
.empty { margin: 58px 0 0; font-size: 40px; font-weight: 400; line-height: 48px; color: #343a40; white-space: nowrap; }

/* overlays */
.cookie { position: absolute; left: 72px; right: 0; bottom: 0; height: 45px; background: #000; color: #fff; display: flex; align-items: center; justify-content: center; gap: 15px; padding-right: 11px; font-size: 18px; }
.cookie-text { margin-top: -2px; }
.cookie-btn { width: 91px; height: 34px; padding-bottom: 2px; background: #d80016; display: flex; align-items: center; justify-content: center; font-size: 16px; }
.chat { position: absolute; left: 86px; top: 981px; width: 131px; height: 69px; border-radius: 35px; background: linear-gradient(90deg, #0ba84f, #30bb2a); display: flex; align-items: center; }
.chat-inner { width: 58px; height: 59px; margin-left: 6px; border-radius: 50%; background: rgba(255,255,255,.12); display: flex; align-items: center; justify-content: center; }
.chat-label { margin: -4px 0 0 6px; font-size: 20px; color: #e4f7e6; }
.chat-dot { position: absolute; left: 109px; top: 1px; width: 19px; height: 19px; border-radius: 50%; background: #2ef23e; border: 2px solid #fff; }
.status { position: absolute; left: 72px; bottom: 0; width: 323px; height: 27px; background: #dee1e6; border-top-right-radius: 5px; padding-left: 7px; font: 18.200px/27px "Noto Sans", sans-serif; color: #444; white-space: nowrap; }
```
